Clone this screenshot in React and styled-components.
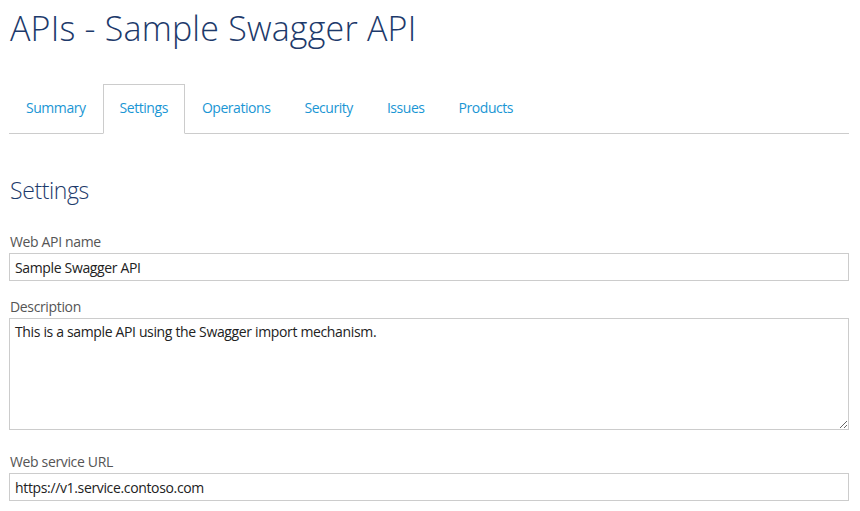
import React from "react";
import styled, { createGlobalStyle } from "styled-components";

const Global = createGlobalStyle`
  html, body { margin: 0; padding: 0; background: #fff; }
  body { font-family: "Open Sans", "Noto Sans", sans-serif; }
`;

const Page = styled.div`
  width: 840px;
  padding: 8px 0 0 9px;
  box-sizing: content-box;
`;

const Title = styled.h1`
  margin: 0 0 36px 1px;
  font-size: 34px;
  line-height: 40px;
  font-weight: 300;
  letter-spacing: 0.2px;
  color: #1d3a6b;
`;

const TabList = styled.nav`
  display: flex;
  border-bottom: 1px solid #cccccc;
`;

const Tab = styled.a`
  display: block;
  padding: 13px 16px 15px;
  margin-bottom: -1px;
  font-size: 14px;
  line-height: 20px;
  color: #1a96d4;
  text-decoration: none;
  letter-spacing: -0.45px;
  border: 1px solid ${(p) => (p.$active ? "#cccccc" : "transparent")};
  border-bottom-color: ${(p) => (p.$active ? "#ffffff" : "transparent")};
  background: ${(p) => (p.$active ? "#ffffff" : "transparent")};
`;

const Heading = styled.h2`
  margin: 41px 0 27px 1px;
  font-size: 23px;
  line-height: 30px;
  font-weight: 300;
  letter-spacing: -0.4px;
  color: #1d3a6b;
`;

const Field = styled.div`
  display: flex;
  flex-direction: column;
  margin-bottom: ${(p) => p.$gap || 16}px;
`;

const Label = styled.label`
  margin: 0 0 1px 1px;
  font-size: 14px;
  line-height: 20px;
  color: #555555;
  letter-spacing: -0.35px;
`;

const TextInput = styled.input`
  box-sizing: border-box;
  width: 840px;
  height: 28px;
  margin: 0;
  padding: 0 5px;
  border: 1px solid #cccccc;
  border-radius: 0;
  font-family: "Open Sans", "Noto Sans", sans-serif;
  font-size: 14px;
  color: #222222;
  letter-spacing: -0.35px;
  outline: none;
`;

const TextArea = styled.textarea`
  box-sizing: border-box;
  display: block;
  width: 840px;
  height: 112px;
  margin: 0;
  padding: 3px 5px;
  border: 1px solid #cccccc;
  border-radius: 0;
  font-family: "Open Sans", "Noto Sans", sans-serif;
  font-size: 14px;
  line-height: 20px;
  color: #222222;
  letter-spacing: -0.35px;
  outline: none;
  resize: both;
`;

const tabs = ["Summary", "Settings", "Operations", "Security", "Issues", "Products"];

export default function App() {
  return (
    <>
      <Global />
      <Page>
        <Title>APIs - Sample Swagger API</Title>
        <TabList>
          {tabs.map((t) => (
            <Tab key={t} href="#" $active={t === "Settings"}>
              {t}
            </Tab>
          ))}
        </TabList>
        <Heading>Settings</Heading>
        <Field>
          <Label>Web API name</Label>
          <TextInput defaultValue="Sample Swagger API" />
        </Field>
        <Field $gap={22}>
          <Label>Description</Label>
          <TextArea defaultValue="This is a sample API using the Swagger import mechanism." />
        </Field>
        <Field>
          <Label>Web service URL</Label>
          <TextInput defaultValue="https://v1.service.contoso.com" />
        </Field>
      </Page>
    </>
  );
}
